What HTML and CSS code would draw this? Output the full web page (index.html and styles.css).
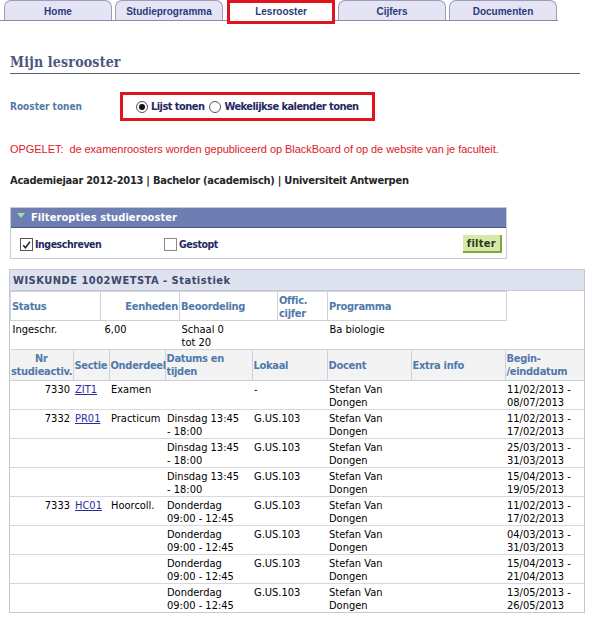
FILE: index.html
```html
<!DOCTYPE html>
<html>
<head>
<meta charset="utf-8">
<link rel="stylesheet" href="styles.css">
</head>
<body>
<nav class="tabs">
  <a class="tab">Home</a>
  <a class="tab">Studieprogramma</a>
  <a class="tab tab-active">Lesrooster</a>
  <a class="tab">Cijfers</a>
  <a class="tab">Documenten</a>
</nav>

<h1 class="title">Mijn lesrooster</h1>

<div class="view-row">
  <span class="view-label">Rooster tonen</span>
  <div class="view-options">
    <label class="radio"><span class="radio-dot checked"></span>Lijst tonen</label>
    <label class="radio"><span class="radio-dot"></span>Wekelijkse kalender tonen</label>
  </div>
</div>

<p class="warning">OPGELET:&nbsp; de examenroosters worden gepubliceerd op BlackBoard of op de website van je faculteit.</p>

<p class="year">Academiejaar 2012-2013 | Bachelor (academisch) | Universiteit Antwerpen</p>

<section class="filter">
  <div class="filter-head"><span class="tri"></span>Filteropties studierooster</div>
  <div class="filter-body">
    <label class="check check-a"><span class="box"><svg viewBox="0 0 12 12" width="12" height="12"><path d="M2.5 6.2 L4.8 9 L9.8 2.4" fill="none" stroke="#222" stroke-width="1.6"/></svg></span>Ingeschreven</label>
    <label class="check check-b"><span class="box"></span>Gestopt</label>
    <button class="filter-btn">filter</button>
  </div>
</section>

<section class="course">
  <div class="course-head">WISKUNDE 1002WETSTA - Statistiek</div>
  <table class="info">
    <colgroup><col style="width:90px"><col style="width:79px"><col style="width:98px"><col style="width:50px"><col style="width:179px"><col></colgroup>
    <tr class="hdr">
      <th>Status</th><th class="r">Eenheden</th><th>Beoordeling</th><th>Offic.<br>cijfer</th><th>Programma</th><td class="blank"></td>
    </tr>
    <tr class="data">
      <td>Ingeschr.</td><td class="units">6,00</td><td>Schaal 0<br>tot 20</td><td></td><td>Ba biologie</td><td></td>
    </tr>
  </table>
  <table class="sched">
    <colgroup><col style="width:63px"><col style="width:36px"><col style="width:56px"><col style="width:87px"><col style="width:75px"><col style="width:84px"><col style="width:94px"><col></colgroup>
    <tr class="hdr2">
      <th class="c">Nr<br>studieactiv.</th><th>Sectie</th><th>Onderdeel</th><th>Datums en<br>tijden</th><th>Lokaal</th><th>Docent</th><th>Extra info</th><th>Begin-<br>/einddatum</th>
    </tr>
    <tr><td class="r">7330</td><td><a>ZIT1</a></td><td>Examen</td><td></td><td>-</td><td>Stefan Van<br>Dongen</td><td></td><td>11/02/2013 -<br>08/07/2013</td></tr>
    <tr><td class="r">7332</td><td><a>PR01</a></td><td>Practicum</td><td>Dinsdag 13:45<br>- 18:00</td><td>G.US.103</td><td>Stefan Van<br>Dongen</td><td></td><td>11/02/2013 -<br>17/02/2013</td></tr>
    <tr><td></td><td></td><td></td><td>Dinsdag 13:45<br>- 18:00</td><td>G.US.103</td><td>Stefan Van<br>Dongen</td><td></td><td>25/03/2013 -<br>31/03/2013</td></tr>
    <tr><td></td><td></td><td></td><td>Dinsdag 13:45<br>- 18:00</td><td>G.US.103</td><td>Stefan Van<br>Dongen</td><td></td><td>15/04/2013 -<br>19/05/2013</td></tr>
    <tr><td class="r">7333</td><td><a>HC01</a></td><td>Hoorcoll.</td><td>Donderdag<br>09:00 - 12:45</td><td>G.US.103</td><td>Stefan Van<br>Dongen</td><td></td><td>11/02/2013 -<br>17/02/2013</td></tr>
    <tr><td></td><td></td><td></td><td>Donderdag<br>09:00 - 12:45</td><td>G.US.103</td><td>Stefan Van<br>Dongen</td><td></td><td>04/03/2013 -<br>31/03/2013</td></tr>
    <tr><td></td><td></td><td></td><td>Donderdag<br>09:00 - 12:45</td><td>G.US.103</td><td>Stefan Van<br>Dongen</td><td></td><td>15/04/2013 -<br>21/04/2013</td></tr>
    <tr><td></td><td></td><td></td><td>Donderdag<br>09:00 - 12:45</td><td>G.US.103</td><td>Stefan Van<br>Dongen</td><td></td><td>13/05/2013 -<br>26/05/2013</td></tr>
  </table>
</section>
</body>
</html>
```

FILE: styles.css
```css
* { box-sizing: border-box; }
body {
  margin: 0;
  background: #fff;
  font-family: "DejaVu Sans Condensed", "DejaVu Sans", sans-serif;
  font-size: 11px;
  color: #000;
}

.tabs {
  display: flex;
  gap: 3px;
  padding-left: 4px;
  width: 558px;
  height: 21px;
  border-bottom: 1px solid #8a8aa8;
}
.tab {
  width: 108px;
  height: 20px;
  border: 1px solid #9c9cba;
  border-bottom: none;
  border-radius: 7px 7px 0 0;
  background: #e4e4f4;
  color: #2b3a78;
  font-family: "Liberation Sans", Arial, sans-serif;
  font-weight: bold;
  font-size: 10px;
  text-align: center;
  line-height: 22px;
}
.tab-active {
  background: #fff;
  border: 3px solid #e0141e;
  border-radius: 0;
  height: 24px;
  line-height: 18px;
  position: relative;
  z-index: 1;
  margin-left: 1px;
}

.title {
  margin: 33px 9px 0 10px;
  padding-bottom: 3px;
  border-bottom: 1px solid #5a5f70;
  font-family: "DejaVu Serif Condensed", "DejaVu Serif", serif;
  font-size: 14px;
  font-weight: bold;
  color: #4b5580;
  letter-spacing: 0.2px;
}

.view-row {
  display: flex;
  align-items: center;
  margin: 18px 0 0 10px;
}
.view-label {
  width: 110px;
  color: #5679a8;
  font-weight: bold;
  font-size: 10px;
}
.view-options {
  display: flex;
  align-items: center;
  gap: 5px;
  width: 255px;
  height: 29px;
  padding-left: 13px;
  border: 3px solid #e0141e;
  font-weight: bold;
  color: #1f2a60;
  white-space: nowrap;
  letter-spacing: -0.55px;
}
.radio { display: flex; align-items: center; gap: 3px; }
.radio-dot {
  width: 12px;
  height: 12px;
  border-radius: 50%;
  border: 1px solid #555;
  background: #fff;
  display: inline-flex;
  align-items: center;
  justify-content: center;
}
.radio-dot.checked::after {
  content: "";
  width: 6px;
  height: 6px;
  border-radius: 50%;
  background: #111;
}

.warning {
  margin: 22px 0 0 10px;
  font-family: "Liberation Sans", Arial, sans-serif;
  font-size: 11px;
  color: #e01828;
  letter-spacing: -0.05px;
}

.year {
  margin: 19px 0 0 10px;
  font-weight: bold;
  color: #262626;
  letter-spacing: -0.25px;
}

.filter {
  margin: 20px 0 0 10px;
  width: 497px;
  border: 1px solid #c6cbd6;
}
.filter-head {
  height: 20px;
  background: #6e7eb2;
  border-bottom: 1px solid #4d5a88;
  color: #fff;
  font-weight: bold;
  letter-spacing: 0.1px;
  display: flex;
  align-items: center;
  padding-left: 6px;
  gap: 6px;
}
.tri {
  width: 0;
  height: 0;
  border-left: 4px solid transparent;
  border-right: 4px solid transparent;
  border-top: 5px solid #9fe0a0;
  margin-top: -4px;
}
.filter-body {
  display: flex;
  align-items: center;
  height: 30px;
  padding: 2px 4px 0 9px;
  font-weight: bold;
  font-size: 10.5px;
  color: #1f2a60;
  letter-spacing: -0.45px;
}
.check { display: flex; align-items: center; gap: 2px; }
.check-a { width: 144px; }
.box {
  width: 13px;
  height: 13px;
  border: 1px solid #555;
  background: #fff;
  display: inline-flex;
}
.check-b .box { border-color: #888; }
.filter-btn {
  margin-left: auto;
  height: 18px;
  padding: 0 4px;
  background: #d7e8a8;
  border: none;
  border-right: 2px solid #7ea83c;
  border-bottom: 2px solid #7ea83c;
  font-family: inherit;
  font-size: 11px;
  font-weight: bold;
  color: #2e3a22;
  letter-spacing: 0.3px;
}

.course {
  margin: 10px 0 0 9px;
  width: 576px;
  border: 1px solid #c4c8d4;
}
.course-head {
  height: 21px;
  background: #dde2ee;
  border-bottom: 1px solid #c4c8d4;
  font-weight: bold;
  color: #3c4868;
  letter-spacing: 0.5px;
  padding: 4px 0 0 3px;
}
table {
  border-collapse: collapse;
  table-layout: fixed;
  width: 100%;
}
th, td {
  padding: 2px 3px 0 2px;
  text-align: left;
  vertical-align: top;
  line-height: 13px;
}
th {
  color: #5079aa;
  font-weight: bold;
  padding: 1px 1px 0 1px;
  letter-spacing: -0.3px;
}
.info .hdr th {
  height: 29px;
  border: 1px solid #cfd2da;
  background: #fff;
  vertical-align: middle;
}
.info .hdr th.r { text-align: right; }
.info .hdr .blank { border: none; border-left: 1px solid #cfd2da; }
.info .data td { height: 28px; padding-top: 2px; border-bottom: 1px solid #cfd2da; }
.info td.units { padding-left: 4px; }

.sched .hdr2 th {
  height: 30px;
  background: #f3f3f3;
  border: 1px solid #cfd2da;
  border-top: none;
  vertical-align: middle;
}
.sched .hdr2 th:first-child { border-left: none; }
.sched .hdr2 th:last-child { border-right: none; }
.sched th.c { text-align: center; }
.sched td {
  height: 29px;
  border-bottom: 1px solid #d6d8de;
  padding-top: 2px;
}
.sched tr:last-child td { border-bottom: none; }
.sched td.r { text-align: right; }
.sched a { color: #2c2ca0; text-decoration: underline; }
```
